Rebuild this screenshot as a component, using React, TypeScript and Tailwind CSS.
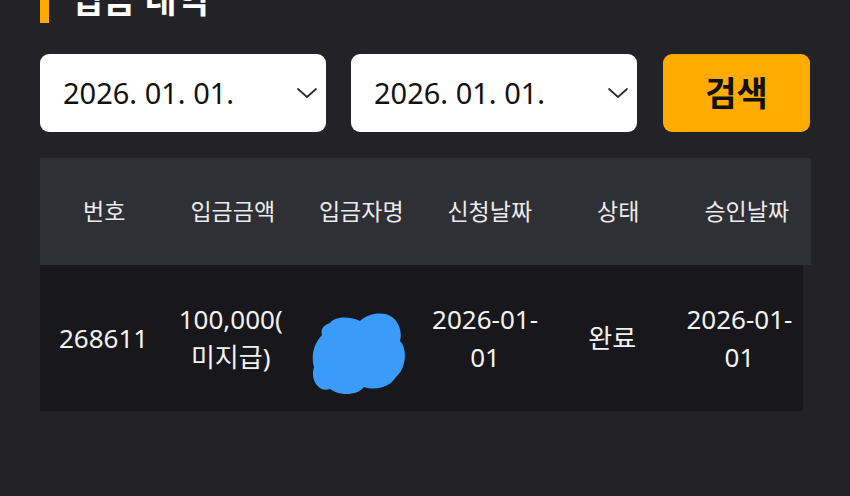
import React from "react";

const Chevron = () => (
  <svg width="22" height="12" viewBox="0 0 22 12" fill="none">
    <polyline points="2,2 11,10 20,2" stroke="#2a2a2a" strokeWidth="1.7" strokeLinecap="round" strokeLinejoin="round" />
  </svg>
);

const DateBox = ({ value }: { value: string }) => (
  <div className="flex h-[78px] w-[286px] items-center justify-between rounded-[9px] bg-white pl-[23px] pr-[8px]">
    <span className="text-[29px] text-[#111]">{value}</span>
    <Chevron />
  </div>
);

const Blob = () => (
  <svg width="96" height="86" viewBox="-2 -2 96 86" className="mt-[46px]">
    <path
      d="M 18 10 C 24 2, 40 4, 48 8 C 56 0, 72 -2, 80 4 C 88 10, 90 20, 88 28 C 96 36, 94 56, 84 64 C 78 74, 64 78, 52 74 C 44 84, 26 82, 18 76 C 6 80, -2 66, 2 54 C -2 40, 4 28, 10 22 C 8 16, 12 12, 18 10 Z"
      fill="#3a9bfb"
    />
  </svg>
);

export default function App() {
  const headers = ["번호", "입금금액", "입금자명", "신청날짜", "상태", "승인날짜"];
  return (
    <div className="h-[496px] w-[850px] overflow-hidden bg-[#222227] px-[40px] font-['Noto_Sans','Noto_Sans_CJK_KR',sans-serif]">
      <div className="mt-[-23px] flex h-[46px] items-center gap-[22px]">
        <div className="h-[46px] w-[9px] bg-[#ffab00]" />
        <span className="text-[35px] font-bold text-white">입금 내역</span>
      </div>

      <div className="mt-[31px] flex w-[770px] gap-[25px]">
        <DateBox value="2026. 01. 01." />
        <DateBox value="2026. 01. 01." />
        <button className="ml-[1px] flex h-[78px] w-[147px] items-center justify-center rounded-[9px] bg-[#ffab00] text-[34px] font-bold text-[#111]">
          검색
        </button>
      </div>

      <div className="mt-[26px]">
        <div className="grid h-[107px] w-[771px] grid-cols-6 items-center bg-[#2f2f36] text-[23px] text-[#ececec]">
          {headers.map((h) => (
            <div key={h} className="text-center">{h}</div>
          ))}
        </div>
        <div className="grid h-[146px] w-[763px] grid-cols-6 items-center bg-[#17171c] text-[26px] leading-[38px] text-[#f2f2f2]">
          <div className="text-center">268611</div>
          <div className="text-center">100,000(<br />미지급)</div>
          <div className="flex h-full items-start justify-center"><Blob /></div>
          <div className="text-center">2026-01-<br />01</div>
          <div className="text-center">완료</div>
          <div className="text-center">2026-01-<br />01</div>
        </div>
      </div>
    </div>
  );
}
